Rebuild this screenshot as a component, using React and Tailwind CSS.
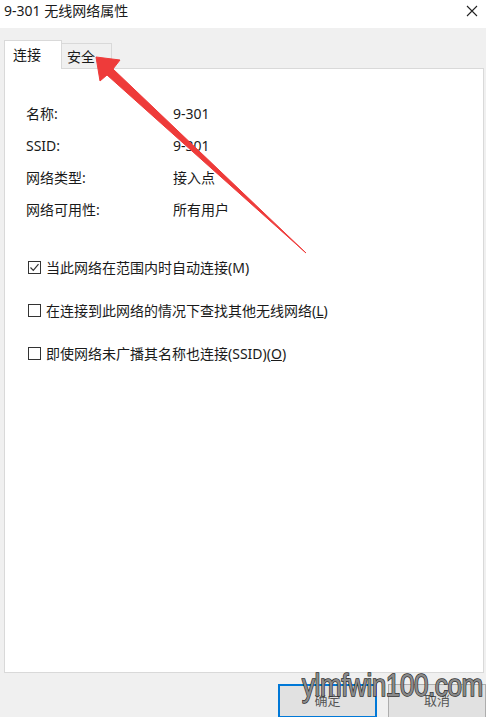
const FONT = "font-['Segoe_UI','Noto_Sans','Noto_Sans_CJK_SC',sans-serif]";

const infoRows = [
  ["名称:", "9-301"],
  ["SSID:", "9-301"],
  ["网络类型:", "接入点"],
  ["网络可用性:", "所有用户"],
];

function CheckBox({ checked }) {
  return (
    <span className="w-[13px] h-[13px] border border-[#333] bg-white flex items-center justify-center shrink-0">
      {checked && (
        <svg width="11" height="11" viewBox="0 0 11 11">
          <path d="M1.5 5.5 L4.3 8.3 L9.5 2.2" fill="none" stroke="#333" strokeWidth="1.2" />
        </svg>
      )}
    </span>
  );
}

function Option({ checked, children }) {
  return (
    <div className="flex items-center gap-[5px] h-[20px]">
      <CheckBox checked={checked} />
      <span>{children}</span>
    </div>
  );
}

export default function App() {
  return (
    <div className={`relative w-[486px] h-[717px] overflow-hidden bg-[#f0f0f0] text-[14px] text-[#1a1a1a] ${FONT}`}>
      {/* title bar */}
      <div className="h-[28px] bg-white flex items-center justify-between pl-[4px] pr-[8px]">
        <span className="text-[14px] leading-none -mt-[6px]">9-301 无线网络属性</span>
        <svg width="12" height="12" viewBox="0 0 12 12" className="-mt-[6px]">
          <path d="M1 1 L11 11 M11 1 L1 11" stroke="#222" strokeWidth="1.1" />
        </svg>
      </div>

      {/* tabs */}
      <div className="flex items-end pl-[4px] pt-[11px] h-[40px]">
        <div className="relative z-10 w-[58px] h-[29px] bg-white border border-b-0 border-[#d9d9d9] pl-[8px] pt-[3px] -mb-[1px]">
          连接
        </div>
        <div className="w-[50px] h-[25px] bg-[#f0f0f0] border border-l-0 border-b-0 border-[#d9d9d9] pl-[5px] pt-[2px]">
          安全
        </div>
      </div>

      {/* panel */}
      <div className="ml-[4px] w-[480px] h-[605px] bg-white border border-[#d9d9d9] pl-[21px] pt-[34px]">
        <div className="flex flex-col gap-[12px]">
          {infoRows.map(([label, value]) => (
            <div key={label} className="flex h-[20px] items-center">
              <span className="w-[147px]">{label}</span>
              <span>{value}</span>
            </div>
          ))}
        </div>
        <div className="flex flex-col gap-[23px] mt-[38px] pl-[2px]">
          <Option checked>当此网络在范围内时自动连接(M)</Option>
          <Option>
            在连接到此网络的情况下查找其他无线网络(<span className="underline">L</span>)
          </Option>
          <Option>
            即使网络未广播其名称也连接(SSID)(<span className="underline">O</span>)
          </Option>
        </div>
      </div>

      {/* buttons */}
      <div className="flex justify-end gap-[11px] pt-[11px]">
        <button className="w-[99px] h-[34px] bg-[#e1e1e1] border-2 border-[#0078d7] text-[13px] text-[#555]">
          确定
        </button>
        <button className="w-[98px] h-[34px] bg-[#e1e1e1] border border-[#adadad] text-[13px] text-[#555]">
          取消
        </button>
      </div>

      {/* annotation arrow */}
      <svg className="absolute left-0 top-0 pointer-events-none" width="486" height="717">
        <polygon
          points="96,57 120,60 113,69 306,253 107,75 100,81"
          fill="#ee3b3a"
          stroke="#ee3b3a"
          strokeWidth="1"
          strokeLinejoin="round"
        />
      </svg>

      {/* watermark */}
      <div className="absolute left-[302px] top-[670px] origin-left scale-x-[0.84] text-[31px] leading-none tracking-[-0.5px] text-[#8a8a8a] font-['Liberation_Sans',sans-serif] [-webkit-text-stroke:1.5px_#2e2e2e] [paint-order:stroke_fill] whitespace-nowrap">
        ylmfwin100.com
      </div>
    </div>
  );
}
